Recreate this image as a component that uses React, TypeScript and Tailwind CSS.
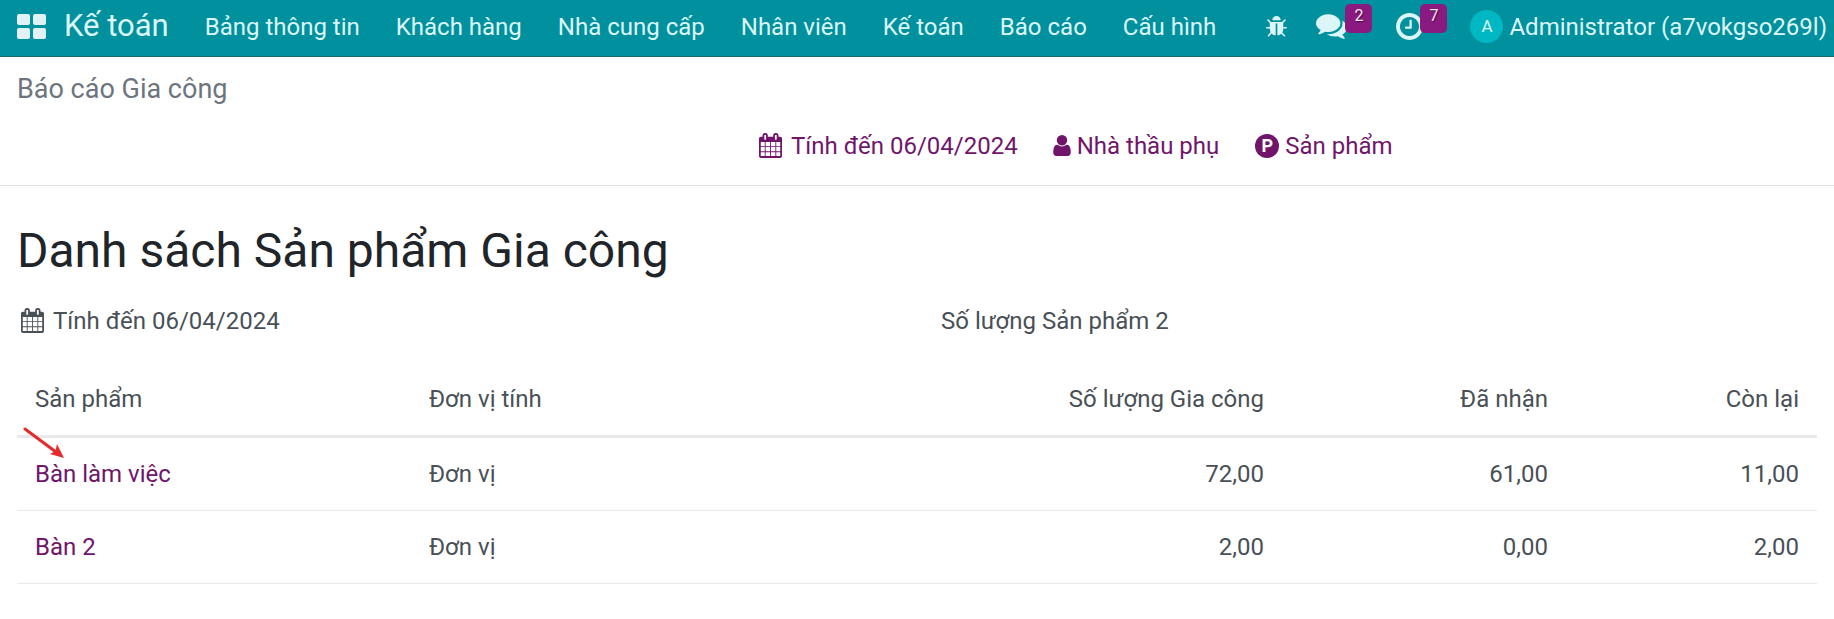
import type { ReactNode } from "react";

const menus = ["Bảng thông tin", "Khách hàng", "Nhà cung cấp", "Nhân viên", "Kế toán", "Báo cáo", "Cấu hình"];

const rows = [
    { name: "Bàn làm việc", uom: "Đơn vị", qty: "72,00", received: "61,00", left: "11,00" },
    { name: "Bàn 2", uom: "Đơn vị", qty: "2,00", received: "0,00", left: "2,00" },
];

const icons = {
    user: "M1280 1399q0 109-62.5 187t-150.5 78h-854q-88 0-150.5-78t-62.5-187q0-85 8.5-160.5t31.5-152 58.5-131 94-89 134.5-34.5q131 128 313 128t313-128q76 0 134.5 34.5t94 89 58.5 131 31.5 152 8.5 160.5zm-256-887q0 159-112.5 271.5t-271.5 112.5-271.5-112.5-112.5-271.5 112.5-271.5 271.5-112.5 271.5 112.5 112.5 271.5z",
    clock: "M1024 544v448q0 14-9 23t-23 9h-320q-14 0-23-9t-9-23v-64q0-14 9-23t23-9h224v-352q0-14 9-23t23-9h64q14 0 23 9t9 23zm416 352q0-148-73-273t-198-198-273-73-273 73-198 198-73 273 73 273 198 198 273 73 273-73 198-198 73-273zm224 0q0 209-103 385.5t-279.5 279.5-385.5 103-385.5-103-279.5-279.5-103-385.5 103-385.5 279.5-279.5 385.5-103 385.5 103 279.5 279.5 103 385.5z",
    comments: "M1408 768q0 139-94 257t-256.5 186.5-353.5 68.5q-86 0-176-16-124 88-278 128-36 9-86 16h-3q-11 0-20.5-8t-11.5-21q-1-3-1-6.5t.5-6.5 2-6l2.5-5 3.5-5.5 4-5 4.5-5 4-4.5q5-6 23-25t26-29.5 22.5-29 25-38.5 20.5-44q-124-72-195-177t-71-224q0-139 94-257t256.5-186.5 353.5-68.5 353.5 68.5 256.5 186.5 94 257zm384 256q0 120-71 224.5t-195 176.5q10 24 20.5 44t25 38.5 22.5 29 26 29.5 23 25q1 1 4 4.5t4.5 5 4 5 3.5 5.5l2.5 5 2 6 .5 6.5-1 6.5q-3 14-13 22t-22 7q-50-7-86-16-154-40-278-128-90 16-176 16-271 0-472-132 58 4 88 4 161 0 309-45t264-129q125-92 192-212t67-254q0-77-23-152 129 71 204 178t75 230z",
    calendar: "M192 1664h288v-288h-288v288zm352 0h320v-288h-320v288zm-352-352h288v-320h-288v320zm352 0h320v-320h-320v320zm-352-384h288v-288h-288v288zm736 736h320v-288h-320v288zm-384-736h320v-288h-320v288zm768 736h288v-288h-288v288zm-384-352h320v-320h-320v320zm-352-864v-288q0-13-9.5-22.5t-22.5-9.5h-64q-13 0-22.5 9.5t-9.5 22.5v288q0 13 9.5 22.5t22.5 9.5h64q13 0 22.5-9.5t9.5-22.5zm736 864h288v-320h-288v320zm-384-384h320v-288h-320v288zm384 0h288v-288h-288v288zm32-480v-288q0-13-9.5-22.5t-22.5-9.5h-64q-13 0-22.5 9.5t-9.5 22.5v288q0 13 9.5 22.5t22.5 9.5h64q13 0 22.5-9.5t9.5-22.5zm384-64v1280q0 52-38 90t-90 38h-1408q-52 0-90-38t-38-90v-1280q0-52 38-90t90-38h128v-96q0-66 47-113t113-47h64q66 0 113 47t47 113v96h384v-96q0-66 47-113t113-47h64q66 0 113 47t47 113v96h128q52 0 90 38t38 90z",
    bug: "M1632 960q0 26-19 45t-45 19h-224q0 171-67 290l208 209q19 19 19 45t-19 45q-18 19-45 19t-45-19l-198-197q-5 5-15 13t-42 28.5-65 36.5-82 29-97 13v-896h-128v896q-51 0-101.5-13.5t-87-33-66-39-43.5-32.5l-15-14-183 207q-20 21-48 21-24 0-43-16-19-18-20.5-44.5t15.5-46.5l202-227q-58-114-58-274h-224q-26 0-45-19t-19-45 19-45 45-19h224v-294l-173-173q-19-19-19-45t19-45 45-19 45 19l173 173h844l173-173q19-19 45-19t45 19 19 45-19 45l-173 173v294h224q26 0 45 19t19 45zm-480-576h-640q0-133 93.5-226.5t226.5-93.5 226.5 93.5 93.5 226.5z",
};

function Icon({ d, box, className }: { d: string; box: string; className: string }) {
    return (
        <svg viewBox={box} className={`shrink-0 ${className}`} fill="currentColor">
            <path d={d} />
        </svg>
    );
}

function Badge({ className, children }: { className: string; children: ReactNode }) {
    return (
        <span className={`absolute flex h-[29px] w-[27px] justify-center rounded-[5px] bg-[#8b1a80] pt-[3px] text-[16px] leading-[17px] text-[#f3e8f2] [text-shadow:1px_1px_1px_rgba(0,0,0,0.5)] ${className}`}>
            {children}
        </span>
    );
}

function Navbar() {
    return (
        <nav className="flex h-[57px] items-center border-b border-[#19666f] bg-[#00909e] pb-[3px] pl-[17px] text-[24px] whitespace-nowrap text-[#dcf6f8]">
            <div className="grid w-[29px] grid-cols-2 gap-[3px] pb-px">
                <span className="h-[11px] rounded-[2px] bg-[#e0f2f4]" />
                <span className="h-[11px] rounded-[2px] bg-[#e0f2f4]" />
                <span className="h-[11px] rounded-[2px] bg-[#e0f2f4]" />
                <span className="h-[11px] rounded-[2px] bg-[#e0f2f4]" />
            </div>
            <span className="ml-[18px] text-[31px]">Kế toán</span>
            <div className="ml-[36px] flex gap-[36px]">
                {menus.map((menu) => (
                    <a key={menu} href="#">{menu}</a>
                ))}
            </div>
            <div className="ml-auto flex items-center pr-[7px]">
                <Icon d={icons.bug} box="32 64 1600 1600" className="h-[21px] w-[21px]" />
                <div className="relative ml-[29px]">
                    <Icon d={icons.comments} box="0 256 1792 1408" className="h-[25px] w-[31px]" />
                    <Badge className="-top-[10px] left-[29px]">2</Badge>
                </div>
                <div className="relative ml-[49px]">
                    <Icon d={icons.clock} box="128 128 1536 1536" className="h-[27px] w-[27px]" />
                    <Badge className="-top-[9px] left-[24px]">7</Badge>
                </div>
                <span className="ml-[47px] flex size-[33px] items-center justify-center rounded-full bg-[#00b8c4] text-[17px]">A</span>
                <span className="ml-[6px]">Administrator (a7vokgso269l)</span>
            </div>
        </nav>
    );
}

function ControlPanel() {
    return (
        <div className="h-[129px] border-b border-[#dee2e6] px-[17px] pt-[16px]">
            <div className="text-[27px] leading-[32px] text-[#6c757d]">Báo cáo Gia công</div>
            <div className="mt-[25px] ml-[742px] flex items-center text-[24px] leading-[32px] text-[#71156b]">
                <Icon d={icons.calendar} box="64 0 1664 1792" className="mb-[2px] h-[25px] w-[23px]" />
                <span className="ml-[9px]">Tính đến 06/04/2024</span>
                <Icon d={icons.user} box="0 128 1280 1536" className="mb-px ml-[35px] h-[21px] w-[18px]" />
                <span className="ml-[6px]">Nhà thầu phụ</span>
                <span className="mb-px ml-[36px] flex size-[24px] items-center justify-center rounded-full bg-[#71156b] text-[18px] font-bold text-white">P</span>
                <span className="ml-[6px]">Sản phẩm</span>
            </div>
        </div>
    );
}

export default function App() {
    return (
        <div className="h-[619px] w-[1834px] overflow-hidden bg-white font-[Roboto,'Liberation_Sans',sans-serif] text-[24px] text-[#495057]">
            <Navbar />
            <ControlPanel />
            <main className="px-[17px] pt-[35px]">
                <h1 className="text-[48px] leading-[60px] text-[#212529]">Danh sách Sản phẩm Gia công</h1>
                <div className="mt-[24px] flex items-center leading-[32px]">
                    <div className="flex w-[924px] items-center pl-[4px]">
                        <Icon d={icons.calendar} box="64 0 1664 1792" className="mb-[2px] h-[25px] w-[23px]" />
                        <span className="ml-[9px]">Tính đến 06/04/2024</span>
                    </div>
                    <span>Số lượng Sản phẩm 2</span>
                </div>
                <div className="relative mt-[25px]">
                    <table className="w-[1800px] table-fixed border-separate border-spacing-0 text-right">
                        <colgroup>
                            <col className="w-[394px]" />
                            <col className="w-[394px]" />
                            <col className="w-[477px]" />
                            <col className="w-[284px]" />
                            <col />
                        </colgroup>
                        <thead className="[&_th]:h-[76px] [&_th]:border-b-3 [&_th]:border-[#e7e9eb] [&_th]:font-normal">
                            <tr>
                                <th className="pl-[18px] text-left">Sản phẩm</th>
                                <th className="pl-[18px] text-left">Đơn vị tính</th>
                                <th className="pr-[18px]">Số lượng Gia công</th>
                                <th className="pr-[18px]">Đã nhận</th>
                                <th className="pr-[18px]">Còn lại</th>
                            </tr>
                        </thead>
                        <tbody className="[&_td]:h-[73px] [&_td]:border-b [&_td]:border-[#e7e9eb]">
                            {rows.map((row) => (
                                <tr key={row.name}>
                                    <td className="pl-[18px] text-left">
                                        <a href="#" className="text-[#71156b]">{row.name}</a>
                                    </td>
                                    <td className="pl-[18px] text-left">{row.uom}</td>
                                    <td className="pr-[18px]">{row.qty}</td>
                                    <td className="pr-[18px]">{row.received}</td>
                                    <td className="pr-[18px]">{row.left}</td>
                                </tr>
                            ))}
                        </tbody>
                    </table>
                    {/* arrow pointing at the first product */}
                    <svg viewBox="0 0 42 32" className="absolute top-[65px] left-[6px] h-[32px] w-[42px]">
                        <path d="M2 2 33 25" stroke="#e52b2b" strokeWidth="3" strokeLinecap="round" />
                        <path d="M41 31 34 17 32.500 24 27 27z" fill="#e52b2b" />
                    </svg>
                </div>
            </main>
        </div>
    );
}
